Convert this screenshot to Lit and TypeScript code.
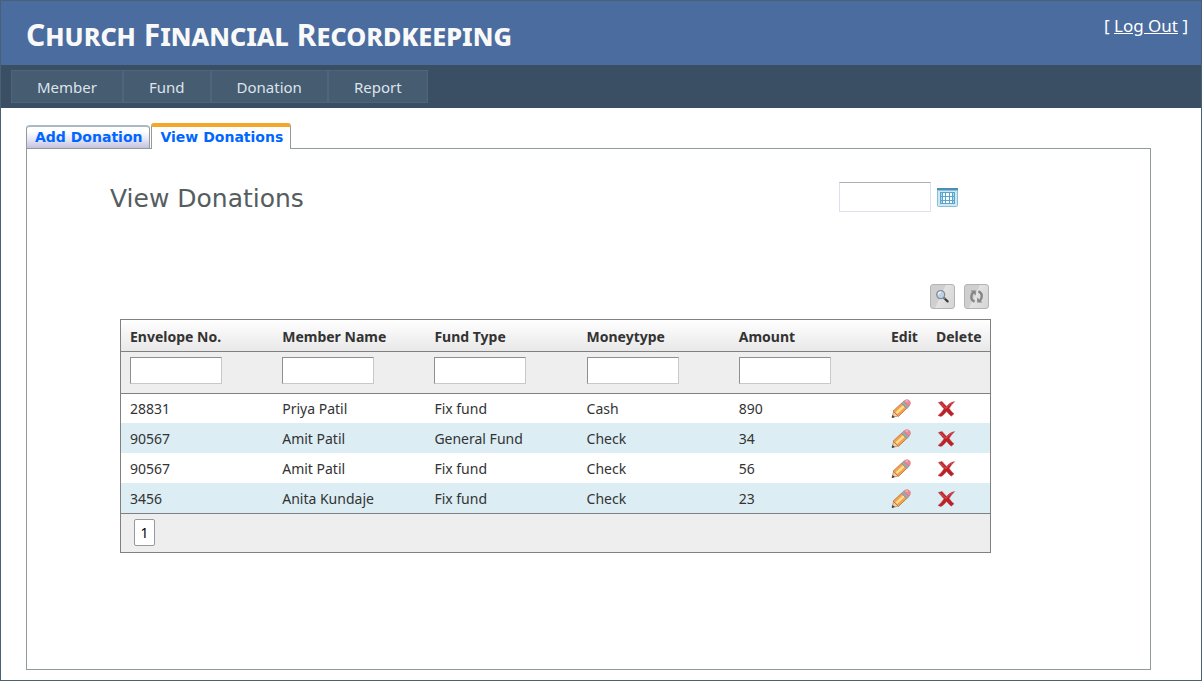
import { LitElement, html, css } from "lit";
import { customElement, state } from "lit/decorators.js";
import { classMap } from "lit/directives/class-map.js";

interface Donation {
  envelope: string;
  member: string;
  fund: string;
  money: string;
  amount: string;
}

const MENU = ["Member", "Fund", "Donation", "Report"];
const TABS = ["Add Donation", "View Donations"];
const COLUMNS = ["Envelope No.", "Member Name", "Fund Type", "Moneytype", "Amount"];
const DONATIONS: Donation[] = [
  { envelope: "28831", member: "Priya Patil", fund: "Fix fund", money: "Cash", amount: "890" },
  { envelope: "90567", member: "Amit Patil", fund: "General Fund", money: "Check", amount: "34" },
  { envelope: "90567", member: "Amit Patil", fund: "Fix fund", money: "Check", amount: "56" },
  { envelope: "3456", member: "Anita Kundaje", fund: "Fix fund", money: "Check", amount: "23" },
];

const calendarIcon = html`<svg width="21" height="19" viewBox="0 0 21 19" aria-hidden="true">
  <rect x="0.5" y="0.5" width="20" height="18" rx="1" fill="#cfe8f3" stroke="#86bdd8" />
  <rect x="0" y="0" width="21" height="2" fill="#4a8fb5" />
  <rect x="1" y="2" width="19" height="1" fill="#8cc2dd" />
  <rect x="3" y="4" width="15" height="12" fill="#5ba5c9" />
  <g fill="#f8fdff">
    <path d="M6 5h2v3h-2zM9 5h3v3h-3zM13 5h2v3h-2zM6 9h2v3h-2zM9 9h3v3h-3zM13 9h2v3h-2zM6 13h2v2h-2zM9 13h3v2h-3zM13 13h2v2h-2z" />
  </g>
  <path d="M4 5h1v3h-1zM4 9h1v3h-1zM4 13h1v2h-1zM16 5h1v3h-1zM16 9h1v3h-1zM16 13h1v2h-1z" fill="#a8d8ee" />
</svg>`;

const searchIcon = html`<svg width="15" height="15" viewBox="0 0 15 15" aria-hidden="true">
  <path d="M8.5 8.5L12.6 12.4" stroke="#3d3d3d" stroke-width="2.2" stroke-linecap="round" />
  <path d="M8 8l2 2" stroke="#8d8d8d" stroke-width="1.4" />
  <circle cx="5.7" cy="5.6" r="4" fill="#bdd0e6" stroke="#858d99" stroke-width="1.3" />
  <path d="M3.4 5.4a2.4 2.4 0 0 1 2.6-2.2" fill="none" stroke="#f3f9ff" stroke-width="1.2" />
</svg>`;

const refreshIcon = html`<svg width="15" height="15" viewBox="0 0 15 15" aria-hidden="true">
  <g fill="none" stroke="#858585" stroke-width="2.4">
    <path d="M5.6 12.6C1.6 11 1.2 6.6 4 3.4" />
    <path d="M9.4 2.4C13.4 4 13.8 8.4 11 11.6" />
  </g>
  <path d="M1.6 1.4h5.2v5.2zM13.4 13.6h-5.2v-5.2z" fill="#858585" />
</svg>`;

const pencilIcon = html`<svg width="20" height="20" viewBox="0 0 20 20" aria-hidden="true">
  <path d="M1 18.6L2.6 12.4L7 17z" fill="#efd3ae" stroke="#a9805d" stroke-width="0.7" />
  <path d="M0.8 18.9l0.8-3 2.2 2.2z" fill="#3d3431" />
  <path d="M2 12.2L10.6 4.2L15.8 9.4L7.4 17.4z" fill="#f3a052" stroke="#b5713a" stroke-width="0.8" />
  <path d="M4.4 13.4L12 6.2l1.7 1.7L6.2 15z" fill="#ffe08c" />
  <path d="M10.6 4.2l2.2-2 5.2 5.2-2.2 2z" fill="#9fa9af" stroke="#7f878c" stroke-width="0.7" />
  <path d="M12.8 2.2c1.7-1.6 3.8-2 5.4-0.6s1.5 3.8-0.2 5.6z" fill="#ee8b94" stroke="#d0707b" stroke-width="0.7" />
  <path d="M14.6 2.5c0.8-0.7 1.7-0.8 2.4-0.3" fill="none" stroke="#fbd2d5" />
</svg>`;

const crossIcon = html`<svg width="20" height="18" viewBox="0 0 20 18" aria-hidden="true">
  <path
    d="M2.4 2.6L6 1.4C7.4 2.8 9 4.8 10.6 6.4C12.4 4.2 15 2.2 18.6 1.6C16.4 3.8 14.6 6 13.2 8.6C14.8 10.6 16.4 12.6 18 13.8L15.2 16.2C13.4 14.6 12 13 10.6 11.4C9 13.4 7 15.8 4.8 16.6L2 15.4C4.6 13.6 6.4 11.2 8 8.8C6.2 6.8 4 4.6 2.4 2.6z"
    fill="#bd2127"
    stroke="#b5484c"
    stroke-width="0.5"
  />
  <path d="M4.2 2.9C6.6 5.4 8.8 7.4 10.2 8.4C11.8 6.4 14 4 16 2.8" fill="none" stroke="#e0595c" />
</svg>`;

@customElement("app-root")
export class AppRoot extends LitElement {
  @state() private activeTab = 1;

  static styles = css`
    :host {
      display: block;
      font-family: "Noto Sans", "Open Sans", sans-serif;
      font-size: 14px;
      color: #333;
    }
    .page {
      box-sizing: border-box;
      display: flex;
      flex-direction: column;
      min-height: 100vh;
      border: 1px solid #496077;
      background: #fff;
    }
    .header {
      display: flex;
      justify-content: space-between;
      align-items: flex-start;
      background: #4b6c9e;
      padding: 0 13px 0 25px;
    }
    .title {
      margin: 0;
      padding: 4px 0 0;
      font-size: 30px;
      line-height: 60px;
      font-weight: 700;
      font-variant: small-caps;
      color: #f9f9f9;
    }
    .login {
      margin: 0;
      padding-top: 12px;
      font-size: 17px;
      line-height: 26px;
      color: #fff;
    }
    .login a {
      color: #fff;
    }
    .menubar {
      background: #3a4f63;
      padding: 5px 10px;
    }
    .menu {
      display: flex;
      margin: 0;
      padding: 0;
      list-style: none;
    }
    .menu a {
      display: block;
      padding: 2px 25px 0;
      border: 1px solid #4e667d;
      background: #465c71;
      color: #dde4ec;
      font-size: 15px;
      line-height: 29px;
      text-decoration: none;
    }
    .main {
      flex: 1;
      display: flex;
      flex-direction: column;
      padding: 15px 50px 10px 25px;
    }
    .tabs {
      display: flex;
      align-items: flex-end;
      gap: 1px;
      margin-bottom: -1px;
    }
    .tab {
      box-sizing: border-box;
      height: 24px;
      margin: 0;
      padding: 0 7px 2px 8px;
      border: 1px solid #919b9c;
      border-top: 2px solid #a9b9c6;
      border-radius: 4px 4px 0 0;
      background: linear-gradient(#fff 20%, #e9e9f6 55%, #c3c3dc);
      font-family: Verdana, "DejaVu Sans", sans-serif;
      font-size: 14px;
      line-height: 18px;
      font-weight: bold;
      color: #06f;
    }
    .tab.active {
      position: relative;
      height: 26px;
      border-top: 4px solid #f4a829;
      border-bottom: 0;
      border-radius: 3px 3px 0 0;
      background: #fff;
    }
    .panel {
      flex: 1;
      border: 1px solid #919b9c;
      padding: 33px 159px 115px 83px;
    }
    .top {
      display: flex;
      justify-content: space-between;
      align-items: flex-start;
      padding-right: 33px;
    }
    .heading {
      margin: 0;
      font-family: Verdana, "DejaVu Sans", sans-serif;
      font-size: 25px;
      line-height: 34px;
      font-weight: normal;
      color: #555d5f;
    }
    .date {
      display: flex;
      align-items: center;
      gap: 6px;
    }
    .date-input {
      box-sizing: border-box;
      width: 92px;
      height: 30px;
      padding: 1px 3px;
      border: 1px solid #dde1eb;
      border-top-color: #abadb3;
      font: inherit;
    }
    .icon-button {
      display: block;
      margin: 0;
      padding: 0;
      border: 0;
      background: none;
      line-height: 0;
      cursor: pointer;
    }
    .icon-button svg {
      display: block;
    }
    .tools {
      display: flex;
      justify-content: flex-end;
      gap: 9px;
      padding: 68px 2px 10px 0;
    }
    .tool {
      box-sizing: border-box;
      display: grid;
      place-items: center;
      width: 25px;
      height: 25px;
      padding: 0;
      border: 1px solid #b4b4b4;
      border-radius: 3px;
      background: linear-gradient(115deg, #cfcfcf 42%, #e2e2e2 46%, #d5d5d5);
    }
    .grid {
      margin-left: 10px;
      border: 1px solid #808080;
    }
    .table {
      width: 100%;
      table-layout: fixed;
      border-collapse: collapse;
    }
    .table th,
    .table td {
      box-sizing: border-box;
      padding: 2px 0 0 9px;
      line-height: 20px;
    }
    .table th {
      height: 31px;
      padding-top: 4px;
      text-align: left;
      font-size: 14px;
      font-weight: 700;
    }
    .titles {
      background: linear-gradient(#fff, #e8e8e8);
    }
    .table td {
      height: 30px;
    }
    .filters {
      background: #eee;
      border-top: 1px solid #808080;
      border-bottom: 1px solid #808080;
    }
    .table .filters td {
      height: 42px;
      padding-bottom: 6px;
    }
    .filter {
      box-sizing: border-box;
      display: block;
      width: 92px;
      height: 27px;
      padding: 1px 4px;
      border: 1px solid #c8c8c8;
      border-top-color: #8e8f8f;
      border-left-color: #8e8f8f;
      background: #fff;
      font: inherit;
    }
    .alt {
      background: #dcedf3;
    }
    .edit-col {
      width: 45px;
    }
    .delete-col {
      width: 63px;
    }
    .pager {
      display: flex;
      padding: 5px 13px 6px;
      border-top: 1px solid #808080;
      background: #eee;
    }
    .page-number {
      box-sizing: border-box;
      width: 21px;
      height: 27px;
      padding: 0;
      border: 1px solid #999;
      border-radius: 2px;
      background: #fff;
      font: inherit;
      line-height: 25px;
      color: #000;
    }
  `;

  render() {
    return html`
      <div class="page">
        <header class="header">
          <h1 class="title">Church Financial Recordkeeping</h1>
          <p class="login">[ <a href="#logout">Log Out</a> ]</p>
        </header>
        <nav class="menubar">
          <ul class="menu">
            ${MENU.map((item) => html`<li><a href="#${item.toLowerCase()}">${item}</a></li>`)}
          </ul>
        </nav>
        <main class="main">
          <div class="tabs" role="tablist">
            ${TABS.map(
              (tab, i) => html`<button
                type="button"
                role="tab"
                class=${classMap({ tab: true, active: i === this.activeTab })}
                aria-selected=${i === this.activeTab ? "true" : "false"}
                @click=${() => (this.activeTab = i)}
              >${tab}</button>`
            )}
          </div>
          <section class="panel" role="tabpanel">
            <div class="top">
              <h2 class="heading">View Donations</h2>
              <div class="date">
                <input class="date-input" type="text" aria-label="Date" />
                <button class="icon-button" type="button" aria-label="Open calendar">${calendarIcon}</button>
              </div>
            </div>
            <div class="tools">
              <button class="tool" type="button" aria-label="Search">${searchIcon}</button>
              <button class="tool" type="button" aria-label="Refresh">${refreshIcon}</button>
            </div>
            <div class="grid">
              <table class="table">
                <colgroup>
                  ${COLUMNS.map(() => html`<col />`)}
                  <col class="edit-col" />
                  <col class="delete-col" />
                </colgroup>
                <thead>
                  <tr class="titles">
                    ${COLUMNS.map((c) => html`<th scope="col">${c}</th>`)}
                    <th scope="col">Edit</th>
                    <th scope="col">Delete</th>
                  </tr>
                  <tr class="filters">
                    ${COLUMNS.map(
                      (c) => html`<td><input class="filter" type="text" aria-label="Filter by ${c}" /></td>`
                    )}
                    <td></td>
                    <td></td>
                  </tr>
                </thead>
                <tbody>
                  ${DONATIONS.map(
                    (d, i) => html`<tr class=${classMap({ alt: i % 2 === 1 })}>
                      <td>${d.envelope}</td>
                      <td>${d.member}</td>
                      <td>${d.fund}</td>
                      <td>${d.money}</td>
                      <td>${d.amount}</td>
                      <td>
                        <button class="icon-button" type="button" aria-label="Edit">${pencilIcon}</button>
                      </td>
                      <td>
                        <button class="icon-button" type="button" aria-label="Delete">${crossIcon}</button>
                      </td>
                    </tr>`
                  )}
                </tbody>
              </table>
              <div class="pager">
                <button class="page-number" type="button">1</button>
              </div>
            </div>
          </section>
        </main>
      </div>
    `;
  }
}
